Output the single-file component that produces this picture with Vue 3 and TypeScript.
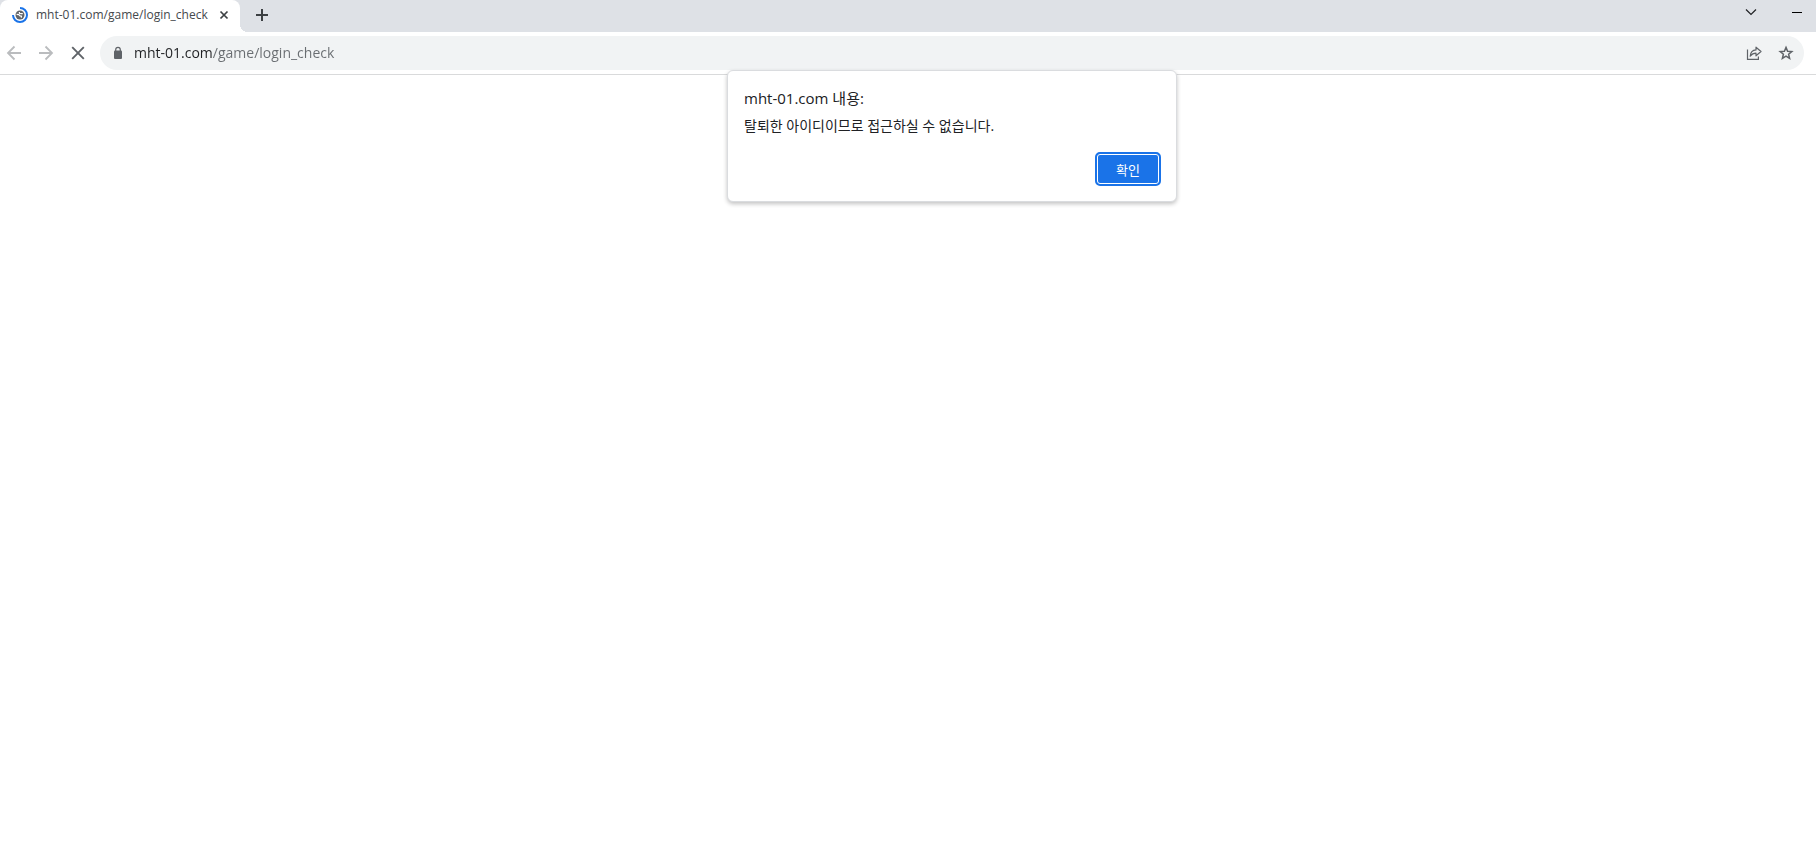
<script setup lang="ts">
import { ref } from 'vue'

const tabTitle = ref('mht-01.com/game/login_check')
const address = ref('mht-01.com/game/login_check')
const dialogOpen = ref(true)
</script>

<template>
  <div class="browser">
    <header class="tab-strip">
      <div class="tab">
        <svg class="favicon" viewBox="0 0 16 16" aria-hidden="true">
          <path d="M8 1A7 7 0 1 1 1 8" fill="none" stroke="#1a73e8" stroke-width="2" />
          <circle cx="8" cy="8" r="4.5" fill="#5f6368" />
          <path d="M4.600 7.400l2.200.2 1.300 1.300 1.400.3-.2 1.500M7.300 5l.2 1.200 1.500.5 1.800-.1" fill="none" stroke="#fff" stroke-width="1.200" />
        </svg>
        <span class="tab-title">{{ tabTitle }}</span>
        <button class="icon-button tab-close" type="button" aria-label="탭 닫기">
          <svg width="16" height="16" viewBox="0 0 16 16" fill="none" stroke="#3c4043" stroke-width="1.7">
            <path d="M4.5 4.5l7 7m0-7l-7 7" />
          </svg>
        </button>
      </div>
      <button class="icon-button new-tab" type="button" aria-label="새 탭">
        <svg width="28" height="28" viewBox="0 0 28 28" fill="none" stroke="#3c4043" stroke-width="2">
          <path d="M14 8v12M8 14h12" />
        </svg>
      </button>
      <div class="window-controls">
        <button class="icon-button" type="button" aria-label="탭 검색">
          <svg width="46" height="24" viewBox="0 0 46 24" fill="none" stroke="#202124" stroke-width="1.2">
            <path d="M18 9.5l5 5 5-5" />
          </svg>
        </button>
        <button class="icon-button" type="button" aria-label="최소화">
          <svg width="46" height="24" viewBox="0 0 46 24" fill="none" stroke="#000" stroke-width="1">
            <path d="M18 12.5h10" />
          </svg>
        </button>
      </div>
    </header>

    <nav class="toolbar">
      <button class="icon-button" type="button" aria-label="뒤로" disabled>
        <svg width="28" height="28" viewBox="0 0 28 28" fill="none" stroke="#babcbe" stroke-width="1.8">
          <path d="M21 14H8.5M14.5 7.5L8 14l6.5 6.5" />
        </svg>
      </button>
      <button class="icon-button" type="button" aria-label="앞으로" disabled>
        <svg width="28" height="28" viewBox="0 0 28 28" fill="none" stroke="#babcbe" stroke-width="1.8">
          <path d="M7 14h12.5M13.5 7.5L20 14l-6.5 6.5" />
        </svg>
      </button>
      <button class="icon-button" type="button" aria-label="로드 중지">
        <svg width="28" height="28" viewBox="0 0 28 28" fill="none" stroke="#5f6368" stroke-width="1.9">
          <path d="M8.2 8.2l11.6 11.6m0-11.6L8.2 19.8" />
        </svg>
      </button>
      <div class="omnibox">
        <button class="icon-button" type="button" aria-label="사이트 정보 보기">
          <svg width="16" height="16" viewBox="0 0 16 16">
            <rect x="4" y="5.5" width="8" height="8.5" rx="1" fill="#5f6368" />
            <path d="M5.700 6V4.700a2.300 2.300 0 0 1 4.600 0V6" fill="none" stroke="#5f6368" stroke-width="1.2" />
          </svg>
        </button>
        <input v-model="address" class="address" type="text" aria-label="주소창" spellcheck="false" />
        <button class="icon-button" type="button" aria-label="공유">
          <svg width="16" height="16" viewBox="0 0 16 16" fill="none" stroke="#5f6368" stroke-width="1.2">
            <path d="M1.5 4.500v9.900h10.900v-2.900" />
            <path d="M4.200 11.200C4.500 7.300 6.700 5.100 10 4.900V2.200L15 6.500l-5 4.300V8.200C7.500 8.200 5.700 9.200 4.200 11.200z" stroke-linejoin="round" />
          </svg>
        </button>
        <button class="icon-button" type="button" aria-label="북마크에 추가">
          <svg width="16" height="16" viewBox="0 0 16 16" fill="none" stroke="#5f6368" stroke-width="1.5">
            <path d="M8 2.400l1.600 3.900 4.200.3-3.200 2.700 1 4.100L8 11.200l-3.600 2.200 1-4.100-3.200-2.700 4.200-.3z" />
          </svg>
        </button>
      </div>
    </nav>

    <main class="page">
      <dialog class="alert" :open="dialogOpen" aria-labelledby="alert-title" aria-describedby="alert-message">
        <h1 id="alert-title" class="alert-title">mht-01.com 내용:</h1>
        <p id="alert-message" class="alert-message">탈퇴한 아이디이므로 접근하실 수 없습니다.</p>
        <div class="alert-actions">
          <button class="confirm" type="button" @click="dialogOpen = false">확인</button>
        </div>
      </dialog>
    </main>
  </div>
</template>

<style>
body {
  margin: 0;
  background: #fff;
}
</style>

<style scoped>
.browser {
  display: flex;
  flex-direction: column;
  min-height: 100vh;
  background: #fff;
  color: #202124;
  font-family: "Open Sans", "Noto Sans CJK KR", sans-serif;
  font-size: 14px;
}

.icon-button {
  display: flex;
  flex: none;
  padding: 0;
  border: 0;
  background: none;
}

.tab-strip {
  display: flex;
  align-items: flex-start;
  height: 32px;
  background: #dee1e6;
}

.tab {
  position: relative;
  display: flex;
  align-items: center;
  box-sizing: border-box;
  width: 240px;
  height: 32px;
  padding: 0 8px 2px 12px;
  border-radius: 8px 8px 0 0;
  background: #fff;
}

.tab::after {
  content: "";
  position: absolute;
  bottom: 0;
  left: 100%;
  width: 8px;
  height: 8px;
  background: radial-gradient(circle at 100% 0, transparent 8px, #fff 8px);
}

.favicon {
  flex: none;
  width: 16px;
  height: 16px;
}

.tab-title {
  flex: 1;
  margin-left: 8px;
  overflow: hidden;
  color: #45494d;
  font-size: 12px;
  line-height: 16px;
  white-space: nowrap;
}

.new-tab {
  margin: 1px 0 0 8px;
}

.window-controls {
  display: flex;
  margin-left: auto;
  margin-right: -4px;
}

.toolbar {
  display: flex;
  align-items: center;
  gap: 4px;
  padding: 4px 12px 4px 0;
  border-bottom: 1px solid #d9dadb;
}

.omnibox {
  display: flex;
  flex: 1;
  align-items: center;
  gap: 16px;
  height: 34px;
  margin-left: 4px;
  padding: 0 10px;
  border-radius: 17px;
  background: #f1f3f4;
}

/* The host is darker than the path that follows it. */
.address {
  flex: 1;
  min-width: 0;
  height: 24px;
  margin-left: -8px;
  padding: 0 0 2px;
  border: 0;
  outline: 0;
  background: linear-gradient(to right, #202124 78px, #696d71 78px);
  background-clip: text;
  -webkit-text-fill-color: transparent;
  color: #202124;
  font-family: inherit;
  font-size: 14px;
}

.page {
  position: relative;
  flex: 1;
}

.alert {
  position: absolute;
  top: -5px;
  left: calc(50% - 181px);
  box-sizing: border-box;
  width: 450px;
  margin: 0;
  padding: 16px 15px 15px 16px;
  border: 1px solid #dadcdf;
  border-radius: 6px;
  background: #fff;
  box-shadow: 0 2px 4px rgba(0, 0, 0, 0.24);
  color: #202124;
}

.alert-title {
  margin: 0;
  font-size: 15px;
  font-weight: 400;
  line-height: 22px;
}

.alert-message {
  margin: 7px 0 16px;
  font-size: 14px;
  line-height: 20px;
}

.alert-actions {
  display: flex;
  justify-content: flex-end;
}

.confirm {
  width: 66px;
  height: 34px;
  padding: 0;
  border: 2px solid #1a73e8;
  border-radius: 5px;
  background: #1a73e8;
  box-shadow: inset 0 0 0 1px #fff;
  color: #fff;
  font-family: inherit;
  font-size: 13px;
  font-weight: 400;
}
</style>
